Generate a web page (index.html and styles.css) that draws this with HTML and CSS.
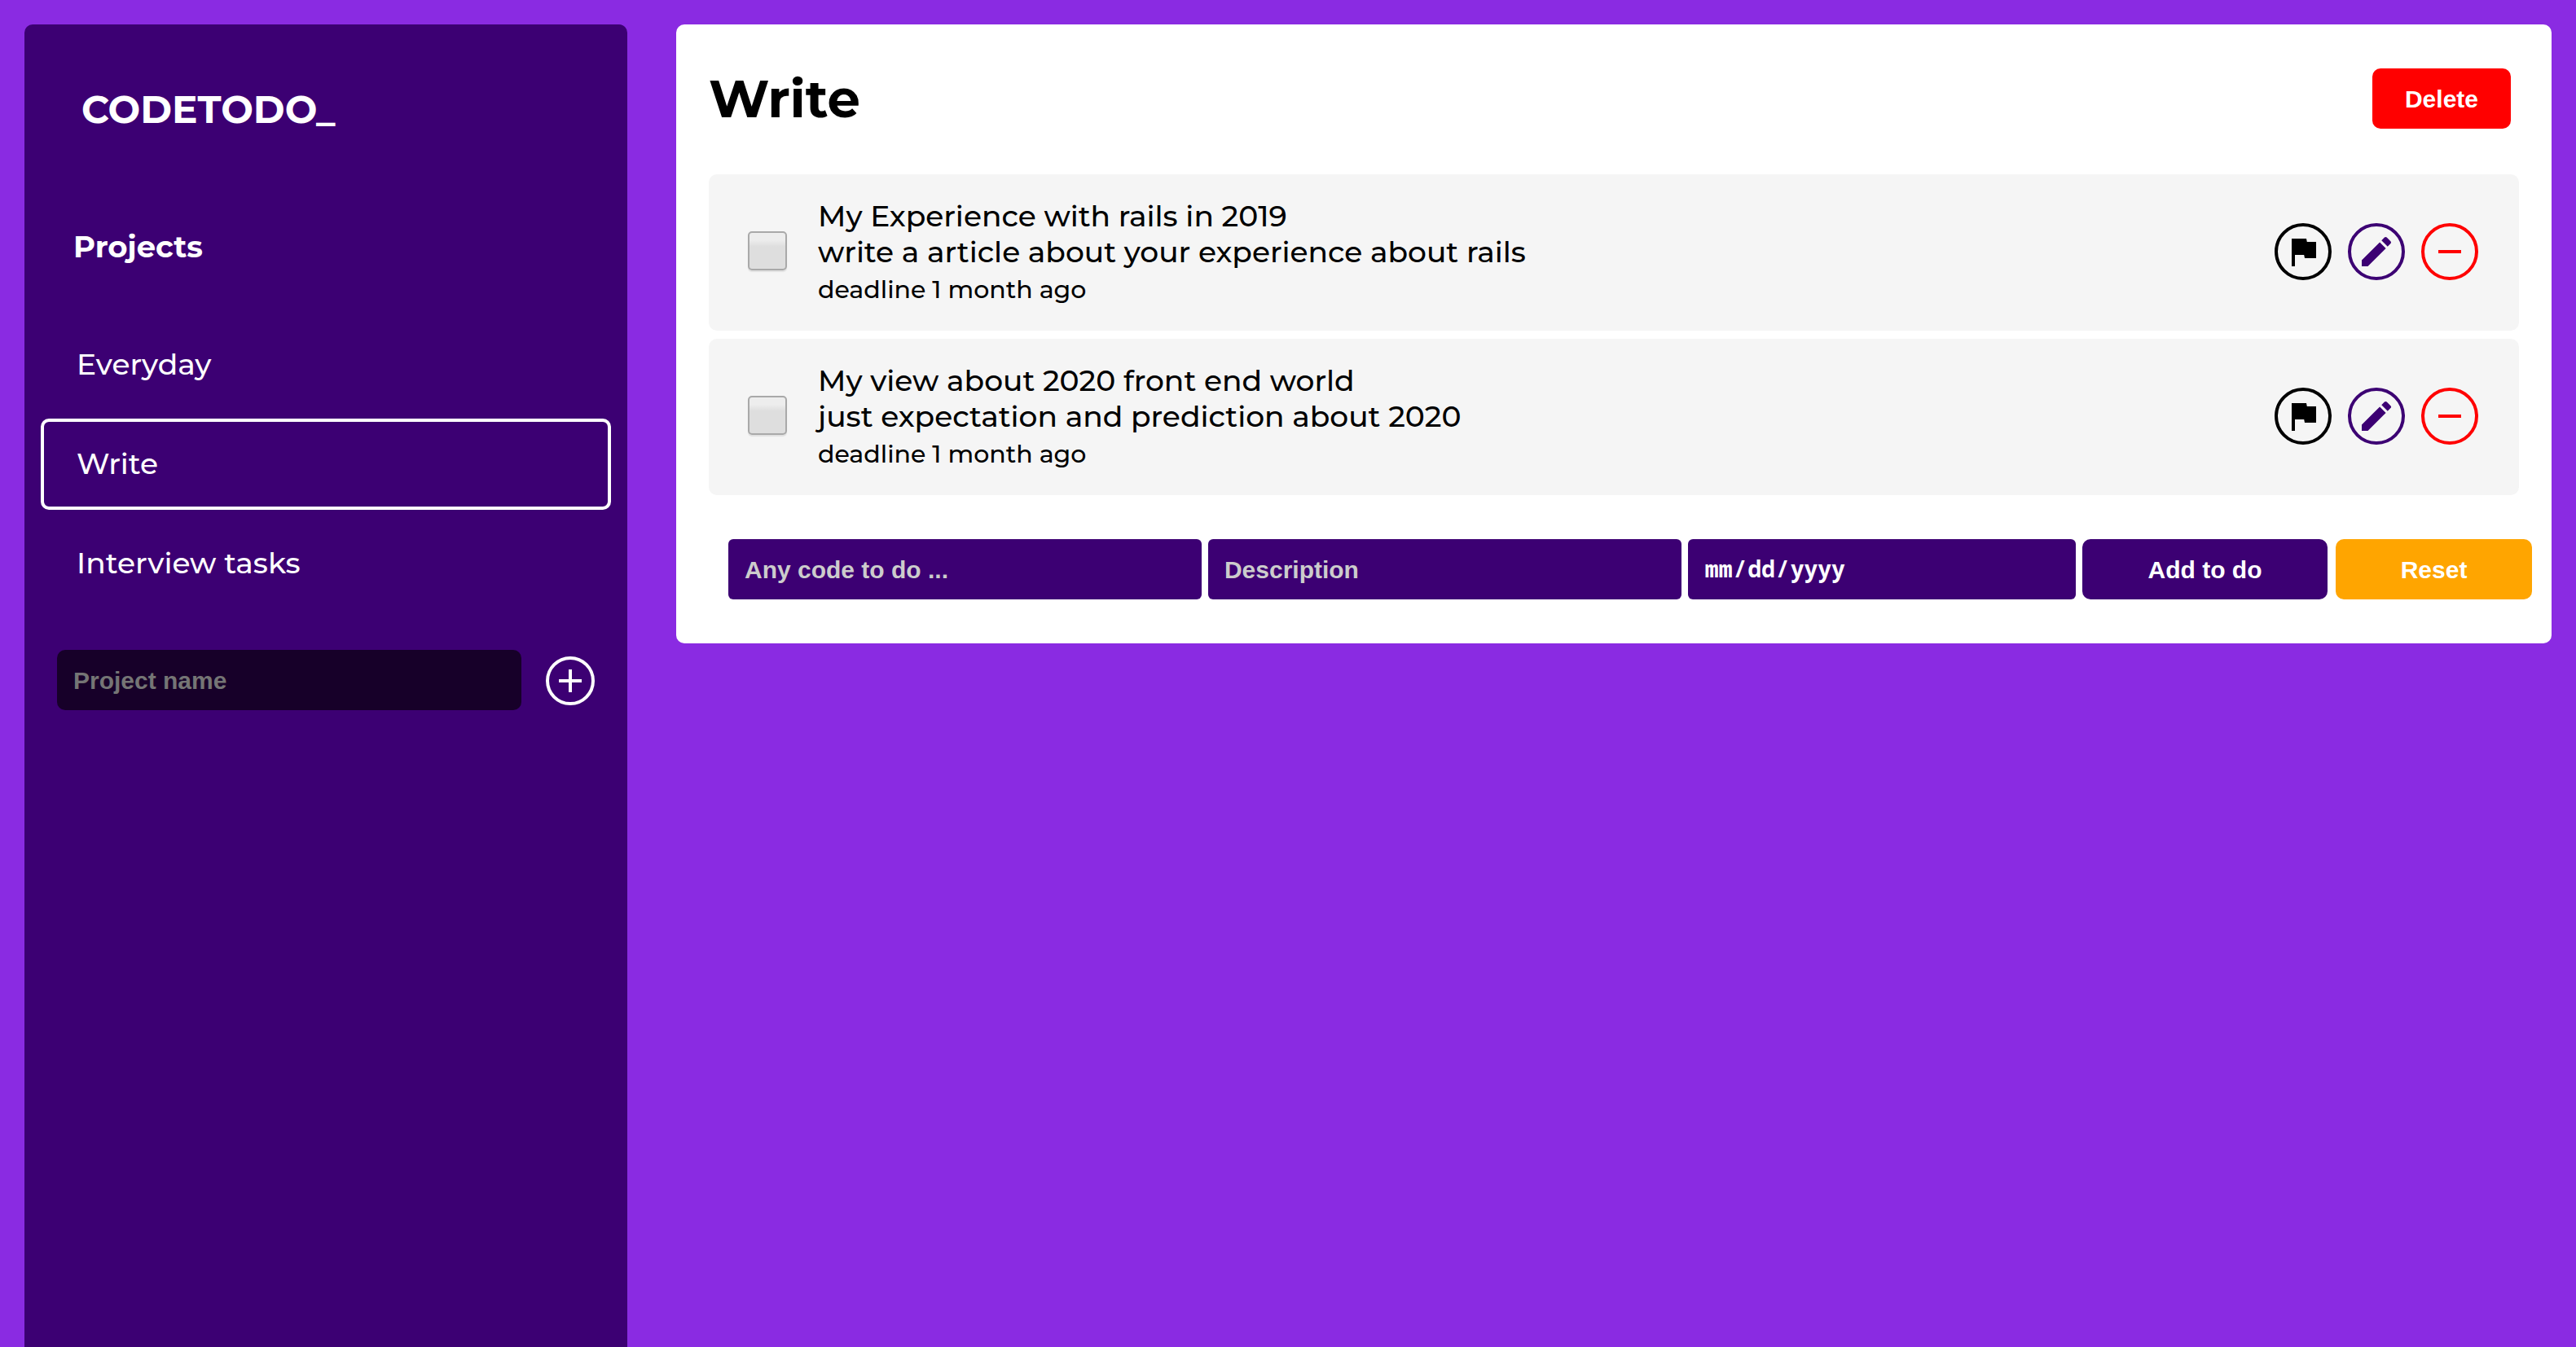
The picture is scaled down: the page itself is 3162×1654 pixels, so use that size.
FILE: index.html
```html
<!DOCTYPE html>
<html lang="en-US">
<head>
<meta charset="utf-8">
<title>CODETODO_</title>
<link rel="stylesheet" href="styles.css">
</head>
<body>
<div class="app">
  <aside class="sidebar">
    <h1 class="logo">CODETODO_</h1>
    <h2 class="sidebar-title">Projects</h2>
    <nav class="projects">
      <a class="project" href="#everyday">Everyday</a>
      <a class="project project-active" href="#write" aria-current="page">Write</a>
      <a class="project" href="#interview-tasks">Interview tasks</a>
    </nav>
    <form class="project-form">
      <input class="field project-field" type="text" placeholder="Project name" aria-label="Project name">
      <button class="round round-add" type="button" aria-label="Add project">
        <svg class="icon" viewBox="0 0 24 24" aria-hidden="true"><path d="M19 13h-6v6h-2v-6H5v-2h6V5h2v6h6v2z"/></svg>
      </button>
    </form>
  </aside>

  <main class="panel">
    <header class="panel-header">
      <h2 class="panel-title">Write</h2>
      <button class="button button-delete" type="button">Delete</button>
    </header>

    <ul class="todos">
      <li class="todo">
        <input class="check" type="checkbox" id="todo-1">
        <label class="todo-text" for="todo-1">
          <span class="todo-line">My Experience with rails in 2019</span>
          <span class="todo-line">write a article about your experience about rails</span>
          <span class="todo-line"><small class="todo-deadline">deadline 1 month ago</small></span>
        </label>
        <div class="actions">
          <button class="round round-flag" type="button" aria-label="Flag">
            <svg class="icon" viewBox="0 0 24 24" aria-hidden="true"><path d="M14.4 6L14 4H5v17h2v-7h5.6l.4 2h7V6z"/></svg>
          </button>
          <button class="round round-edit" type="button" aria-label="Edit">
            <svg class="icon" viewBox="0 0 24 24" aria-hidden="true"><path d="M3 17.25V21h3.75L17.81 9.94l-3.75-3.75L3 17.25zM20.71 7.04a1 1 0 0 0 0-1.41l-2.34-2.34a1 1 0 0 0-1.41 0l-1.83 1.83 3.75 3.75 1.83-1.83z"/></svg>
          </button>
          <button class="round round-remove" type="button" aria-label="Remove">
            <svg class="icon" viewBox="0 0 24 24" aria-hidden="true"><path d="M19 13H5v-2h14v2z"/></svg>
          </button>
        </div>
      </li>
      <li class="todo">
        <input class="check" type="checkbox" id="todo-2">
        <label class="todo-text" for="todo-2">
          <span class="todo-line">My view about 2020 front end world</span>
          <span class="todo-line">just expectation and prediction about 2020</span>
          <span class="todo-line"><small class="todo-deadline">deadline 1 month ago</small></span>
        </label>
        <div class="actions">
          <button class="round round-flag" type="button" aria-label="Flag">
            <svg class="icon" viewBox="0 0 24 24" aria-hidden="true"><path d="M14.4 6L14 4H5v17h2v-7h5.6l.4 2h7V6z"/></svg>
          </button>
          <button class="round round-edit" type="button" aria-label="Edit">
            <svg class="icon" viewBox="0 0 24 24" aria-hidden="true"><path d="M3 17.25V21h3.75L17.81 9.94l-3.75-3.75L3 17.25zM20.71 7.04a1 1 0 0 0 0-1.41l-2.34-2.34a1 1 0 0 0-1.41 0l-1.83 1.83 3.75 3.75 1.83-1.83z"/></svg>
          </button>
          <button class="round round-remove" type="button" aria-label="Remove">
            <svg class="icon" viewBox="0 0 24 24" aria-hidden="true"><path d="M19 13H5v-2h14v2z"/></svg>
          </button>
        </div>
      </li>
    </ul>

    <form class="todo-form">
      <input class="field todo-field" type="text" placeholder="Any code to do ..." aria-label="Any code to do">
      <input class="field todo-field" type="text" placeholder="Description" aria-label="Description">
      <input class="field todo-field date-field" type="date" aria-label="Deadline">
      <div class="form-buttons">
        <button class="button button-add" type="button">Add to do</button>
        <button class="button button-reset" type="reset">Reset</button>
      </div>
    </form>
  </main>
</div>
</body>
</html>
```
FILE: styles.css
```css
:root {
  --indigo: #3c0073;
  --violet: #8a2be2;
}

* {
  box-sizing: border-box;
}

body {
  margin: 0;
  background: var(--violet);
  color: #000;
  font-family: Montserrat, Inter, sans-serif;
  font-size: 36px;
  font-weight: 500;
  line-height: 44px;
}

h1,
h2,
ul {
  margin: 0;
  padding: 0;
}

.app {
  display: grid;
  grid-template-columns: 740px minmax(0, 1fr);
  gap: 60px;
  align-items: start;
  min-height: 100vh;
  padding: 30px 30px 0;
}

/* Sidebar */

.sidebar {
  align-self: stretch;
  padding: 75px 20px 20px;
  border-radius: 10px 10px 0 0;
  background: var(--indigo);
  color: #fff;
}

.logo {
  padding-left: 50px;
  font-size: 47px;
  font-weight: 700;
  line-height: 60px;
}

.sidebar-title {
  margin-top: 114px;
  padding-left: 40px;
  font-size: 37px;
  font-weight: 700;
  line-height: 48px;
}

.projects {
  display: grid;
  gap: 10px;
  margin-top: 65px;
}

.project {
  padding: 29px 40px 31px;
  border: 4px solid transparent;
  border-radius: 10px;
  color: #fff;
  text-decoration: none;
}

.project-active {
  border-color: #fff;
}

.project-form {
  display: flex;
  align-items: center;
  gap: 30px;
  margin-top: 50px;
  padding: 0 20px;
}

/* Controls */

.field,
.button {
  height: 74px;
  border: 0;
  font-family: "Liberation Sans", Arial, sans-serif;
  font-size: 30px;
  font-weight: 700;
}

.field {
  min-width: 0;
  padding: 2px 20px 0;
  color: #fff;
}

.project-field {
  flex: 1;
  border-radius: 10px;
  background: #170029;
}

.project-field::placeholder {
  color: #757575;
}

.todo-field {
  border-radius: 6px;
  background: var(--indigo);
}

.todo-field::placeholder {
  color: #ccc;
}

.date-field {
  padding: 0 20px 2px;
  font-family: "Noto Sans Mono", "DejaVu Sans Mono", monospace;
  font-size: 28px;
}

.date-field::-webkit-calendar-picker-indicator {
  display: none;
}

.button {
  padding: 2px 40px 0;
  border-radius: 10px;
  color: #fff;
}

.button-delete {
  background: #f00;
}

.button-add {
  flex: 5;
  background: var(--indigo);
}

.button-reset {
  flex: 4;
  background: #ffa500;
}

.round {
  display: grid;
  place-items: center;
  width: 70px;
  height: 70px;
  padding: 0;
  border: 4px solid currentColor;
  border-radius: 50%;
  background: none;
}

.round-add {
  width: 60px;
  height: 60px;
  margin-top: 2px;
  color: #fff;
}

.round-flag {
  color: #000;
}

.round-edit {
  color: var(--indigo);
}

.round-remove {
  color: #f00;
}

.icon {
  width: 48px;
  height: 48px;
  fill: currentColor;
}

/* Panel */

.panel {
  padding: 52px 0 54px;
  border-radius: 10px;
  background: #fff;
}

.panel-header {
  display: flex;
  align-items: center;
  justify-content: space-between;
  padding: 0 50px 0 40px;
}

.panel-title {
  font-size: 64px;
  font-weight: 700;
  line-height: 78px;
}

.todos {
  display: grid;
  gap: 10px;
  margin: 54px 40px;
  list-style: none;
}

.todo {
  display: flex;
  align-items: center;
  padding: 29px 50px 31px 48px;
  border-radius: 10px;
  background: #f5f5f5;
}

.check {
  appearance: none;
  width: 48px;
  height: 48px;
  margin: 0 38px 2px 0;
  border: 2px solid #a9a9a9;
  border-radius: 5px;
  background: linear-gradient(#ededed, #ededed 20%, #dedede 38%, #dedede);
  box-shadow: 0 2px 1px #e0e0e0;
}

.check:checked {
  background: var(--indigo);
}

.todo-text {
  display: grid;
  flex: 1;
}

.todo-deadline {
  font-size: 30px;
  line-height: 1;
}

.actions {
  display: flex;
  gap: 20px;
}

.todo-form {
  display: grid;
  grid-template-columns: 61fr 61fr 50fr 552px;
  gap: 8px;
  padding: 0 24px 0 64px;
}

.form-buttons {
  display: flex;
  gap: 10px;
}

.form-buttons .button {
  padding: 2px 0 0;
}
```
